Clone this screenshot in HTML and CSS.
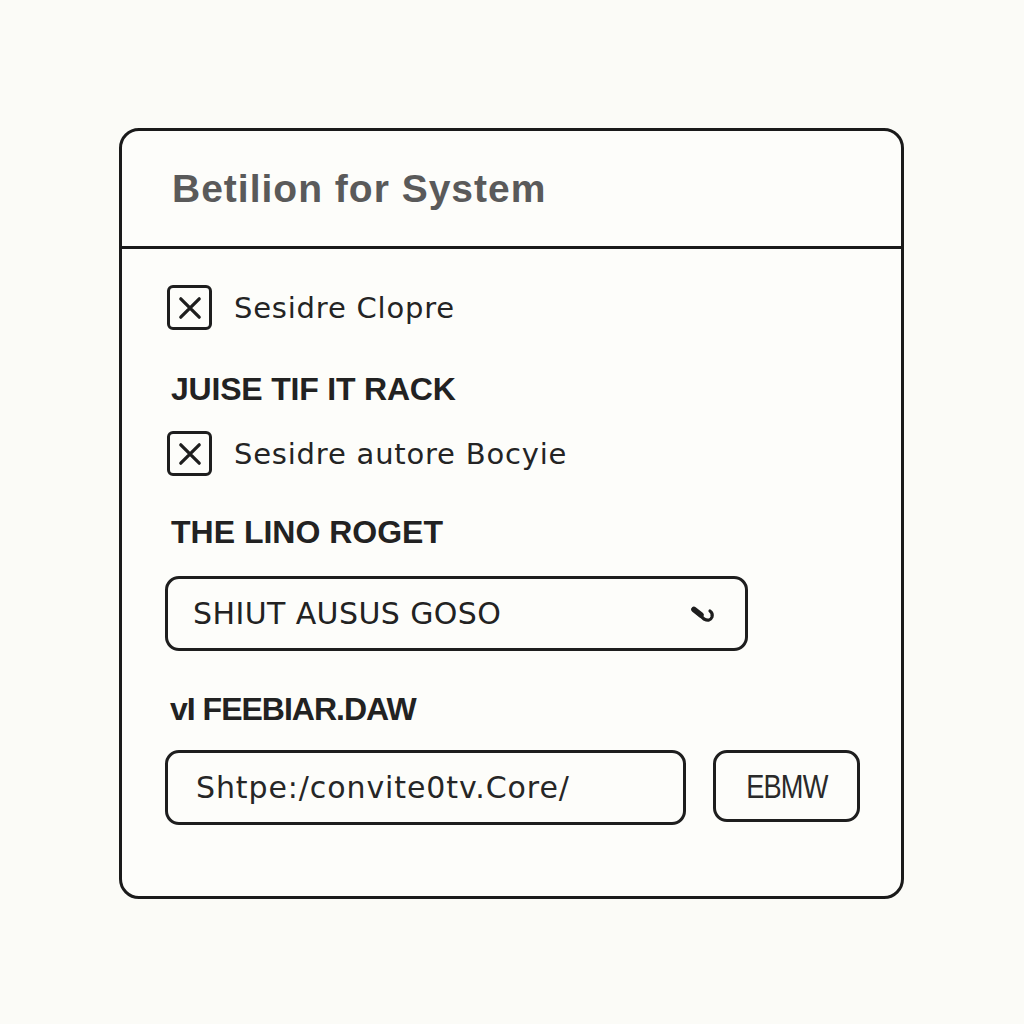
FILE: index.html
```html
<!DOCTYPE html>
<html>
<head>
<meta charset="utf-8">
<link rel="stylesheet" href="styles.css">
</head>
<body>
<div class="page">
  <div class="card">
    <div class="card-header">
      <h1 class="title">Betilion for System</h1>
    </div>
    <div class="card-body">
      <label class="check-row row-first">
        <span class="checkbox">
          <svg viewBox="0 0 24 24" width="26" height="26"><path d="M3.5 3.5 L20.5 20.5 M20.5 3.5 L3.5 20.5" stroke="#1e1e1e" stroke-width="3" stroke-linecap="round" fill="none"/></svg>
        </span>
        <span class="check-text">Sesidre Clopre</span>
      </label>
      <div class="section-label label-one">JUISE TIF IT RACK</div>
      <label class="check-row row-second">
        <span class="checkbox">
          <svg viewBox="0 0 24 24" width="26" height="26"><path d="M3.5 3.5 L20.5 20.5 M20.5 3.5 L3.5 20.5" stroke="#1e1e1e" stroke-width="3" stroke-linecap="round" fill="none"/></svg>
        </span>
        <span class="check-text">Sesidre autore Bocyie</span>
      </label>
      <div class="section-label label-two">THE LINO ROGET</div>
      <div class="select">
        <span class="select-text">SHIUT AUSUS GOSO</span>
        <svg class="select-icon" viewBox="0 0 30 22" width="30" height="22"><path d="M4 5 L15 15 Q21 18 23 13 Q24 9 21 7" stroke="#1e1e1e" stroke-width="3.2" stroke-linecap="round" stroke-linejoin="round" fill="none"/><path d="M5 5.5 L12 11" stroke="#1e1e1e" stroke-width="5.5" stroke-linecap="round"/></svg>
      </div>
      <div class="section-label label-three">vI FEEBIAR.DAW</div>
      <div class="input-row">
        <div class="text-input">Shtpe:/convite0tv.Core/</div>
        <button class="btn"><span class="btn-text">EBMW</span></button>
      </div>
    </div>
  </div>
</div>
</body>
</html>
```
FILE: styles.css
```css
html, body {
  margin: 0;
  padding: 0;
  background: #fbfbf7;
}
.page {
  padding-top: 128px;
  padding-left: 119px;
}
.card {
  box-sizing: border-box;
  width: 785px;
  height: 771px;
  border: 3px solid #1a1a1a;
  border-radius: 20px;
  background: #fdfdfa;
}
.card-header {
  box-sizing: border-box;
  height: 118px;
  padding: 38px 0 0 50px;
  border-bottom: 3px solid #1a1a1a;
}
.title {
  margin: 0;
  font-family: "Liberation Sans", Arial, sans-serif;
  font-weight: 700;
  font-size: 39px;
  line-height: 40px;
  letter-spacing: 1px;
  color: #5a5a5a;
}
.card-body {
  padding: 0 0 0 45px;
  display: flex;
  flex-direction: column;
  align-items: flex-start;
}
.check-row {
  display: flex;
  align-items: center;
}
.row-first { margin-top: 36px; }
.row-second { margin-top: 26px; }
.checkbox {
  box-sizing: border-box;
  width: 45px;
  height: 45px;
  border: 3px solid #1e1e1e;
  border-radius: 6px;
  display: flex;
  align-items: center;
  justify-content: center;
}
.check-text {
  margin-left: 22px;
  font-family: "DejaVu Sans", sans-serif;
  font-size: 29px;
  letter-spacing: 0.8px;
  color: #242424;
}
.section-label {
  font-family: "Liberation Sans", Arial, sans-serif;
  font-weight: 700;
  font-size: 32px;
  line-height: 32px;
  color: #222;
  padding-left: 4px;
}
.label-one { margin-top: 43px; letter-spacing: -0.2px; }
.label-two { margin-top: 40px; }
.label-three { margin-top: 42px; letter-spacing: -1px; padding-left: 3px; }
.select {
  box-sizing: border-box;
  margin-top: 28px;
  margin-left: -2px;
  width: 583px;
  height: 75px;
  border: 3px solid #1e1e1e;
  border-radius: 14px;
  padding: 0 26px 0 25px;
  display: flex;
  align-items: center;
  justify-content: space-between;
}
.select-text {
  font-family: "DejaVu Sans", sans-serif;
  font-size: 30px;
  letter-spacing: 0.4px;
  color: #222;
}
.select-icon {
  margin-top: 2px;
}
.input-row {
  margin-top: 25px;
  margin-left: -2px;
  display: flex;
  gap: 27px;
}
.text-input {
  box-sizing: border-box;
  width: 521px;
  height: 75px;
  border: 3px solid #1e1e1e;
  border-radius: 14px;
  padding: 0 0 0 28px;
  display: flex;
  align-items: center;
  font-family: "DejaVu Sans", sans-serif;
  font-size: 30px;
  letter-spacing: 0.9px;
  color: #262626;
}
.btn {
  box-sizing: border-box;
  width: 147px;
  height: 72px;
  border: 3px solid #1e1e1e;
  border-radius: 14px;
  background: transparent;
  padding: 0;
  display: flex;
  align-items: center;
  justify-content: center;
}
.btn-text {
  display: inline-block;
  font-family: "Liberation Sans", Arial, sans-serif;
  font-weight: 400;
  font-size: 34px;
  letter-spacing: -1px;
  color: #2a2a2a;
  transform: scaleX(0.8);
}
```
